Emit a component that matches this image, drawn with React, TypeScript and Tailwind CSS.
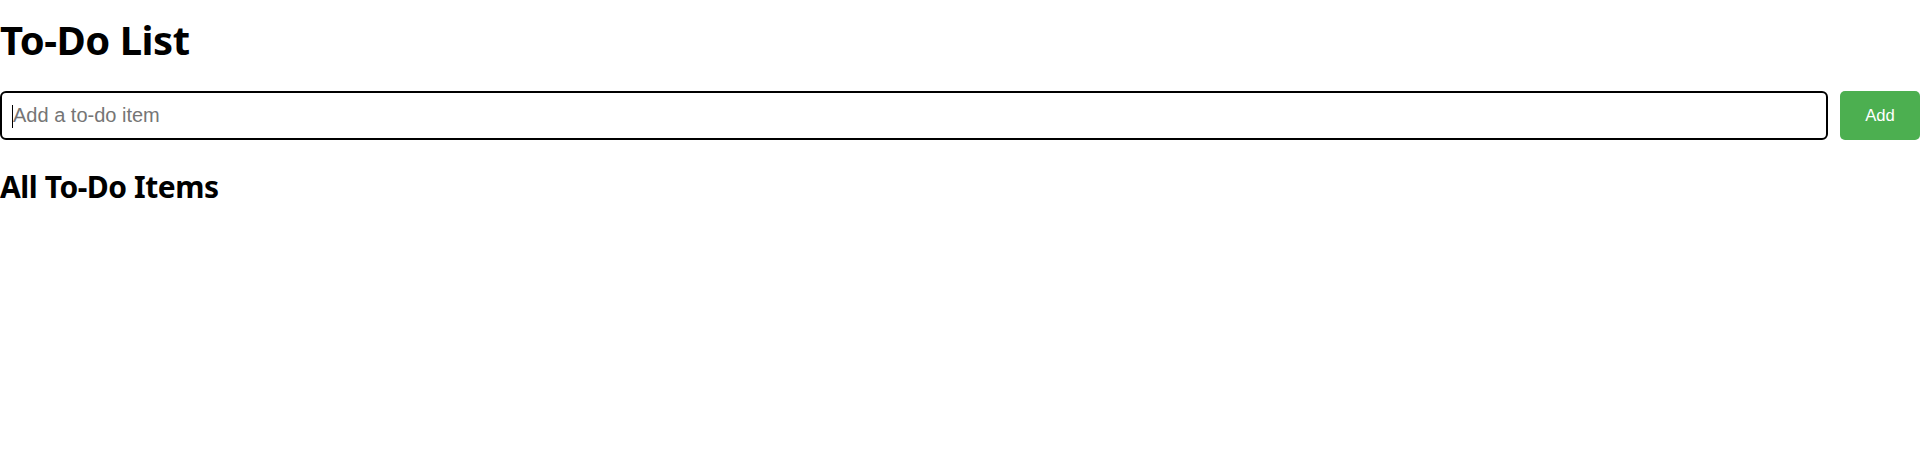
import React from "react";

export default function App() {
  return (
    <div className="w-[1920px] h-[474px] bg-white text-black" style={{ fontFamily: '"Noto Sans", "Open Sans", sans-serif' }}>
      <h1 className="m-0 pt-[20px] text-[40px] leading-[40px] font-bold tracking-[-0.5px]">To-Do List</h1>
      <div className="mt-[31px] flex gap-[12px]">
        <div className="relative flex-1">
          <input
            type="text"
            placeholder="Add a to-do item"
            className="w-full h-[49px] border-2 border-black rounded-[6px] pl-[11px] pr-[10px] text-[20px] outline-none placeholder:text-[#757575]"
            style={{ fontFamily: '"Liberation Sans", Arial, sans-serif' }}
          />
          <span className="absolute left-[12px] top-[14px] w-[1px] h-[23px] bg-black" />
        </div>
        <button
          className="w-[80px] h-[49px] bg-[#4CAF50] text-white rounded-[5px] text-[16.67px]"
          style={{ fontFamily: '"Liberation Sans", Arial, sans-serif' }}
        >
          Add
        </button>
      </div>
      <h2 className="m-0 mt-[32px] text-[30px] leading-[30px] font-bold tracking-[-0.45px]">All To-Do Items</h2>
    </div>
  );
}
